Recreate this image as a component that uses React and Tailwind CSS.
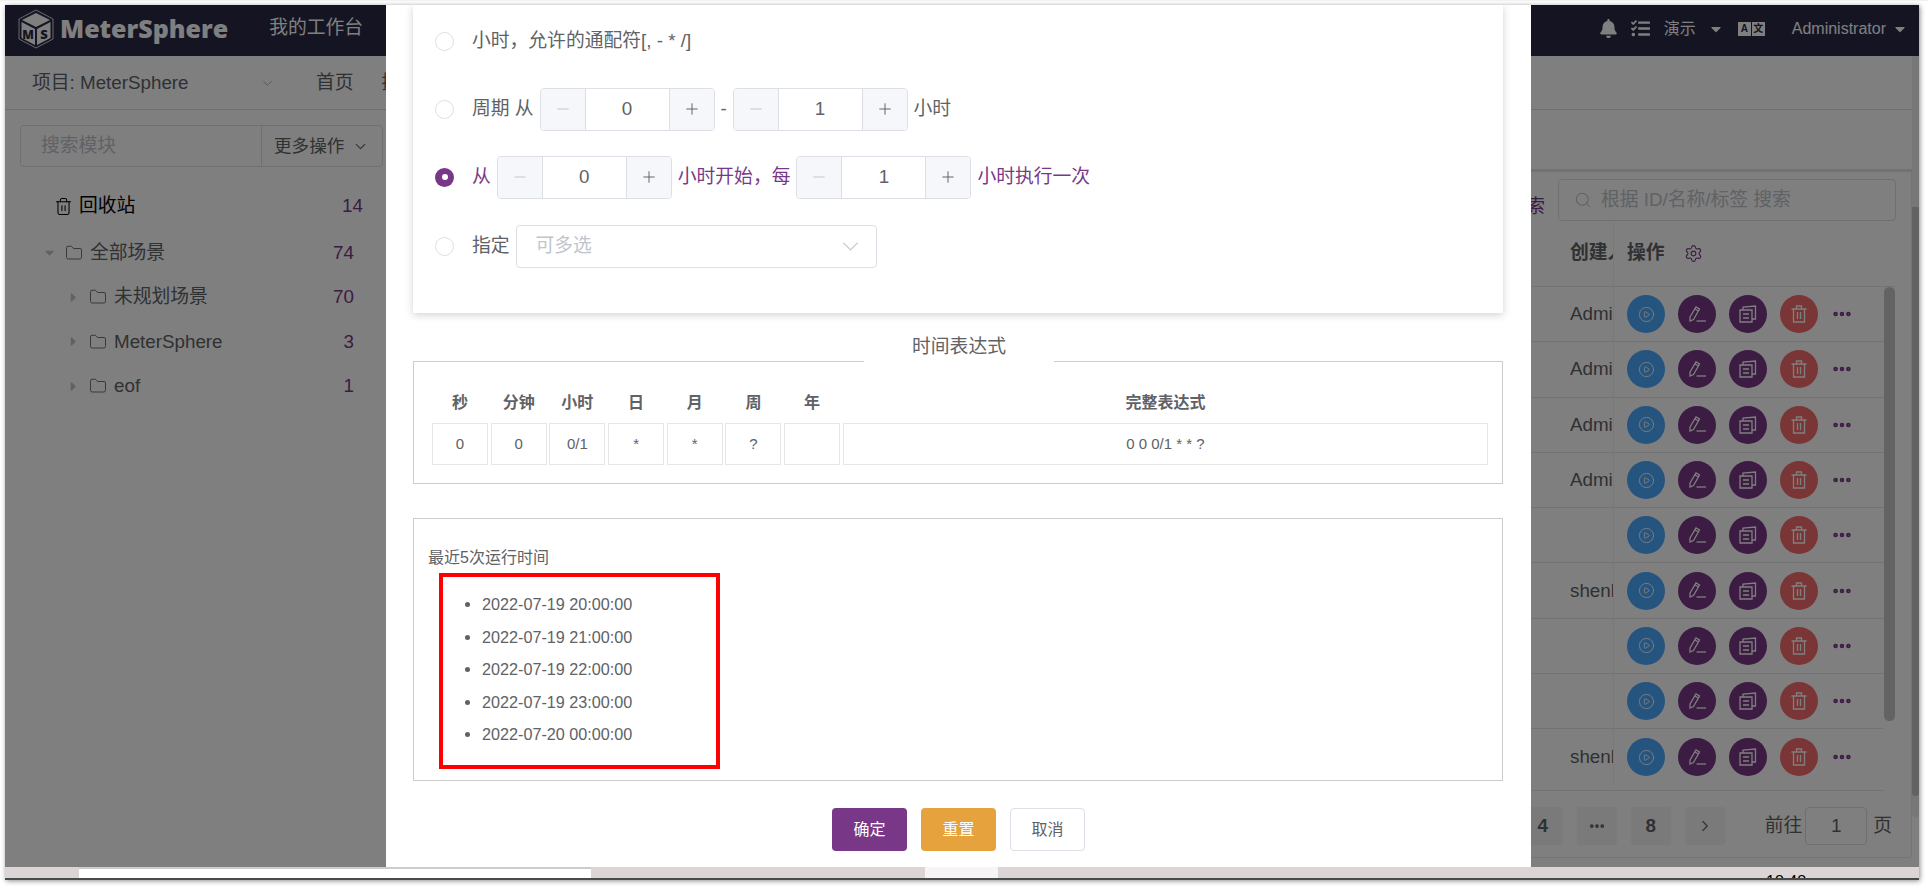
import { Minus, Plus, ChevronDown, ChevronRight, Search, Settings, CirclePlay, MoreHorizontal, Folder, Trash2 } from "lucide-react";
import { FaBell, FaTasks, FaCaretDown, FaCaretRight } from "react-icons/fa";

const creators = ["Administrator", "Administrator", "Administrator", "Administrator", "", "shenlei", "", "", "shenlei"];
const cronHead = ["秒", "分钟", "小时", "日", "月", "周", "年", "完整表达式"];
const cronVals = ["0", "0", "0/1", "*", "*", "?", "", "0 0 0/1 * * ?"];
const nextRuns = ["2022-07-19 20:00:00", "2022-07-19 21:00:00", "2022-07-19 22:00:00", "2022-07-19 23:00:00", "2022-07-20 00:00:00"];
const tree = [
  { name: "未规划场景", count: 70 },
  { name: "MeterSphere", count: 3 },
  { name: "eof", count: 1 },
];

const Logo = () => (
  <svg width="36" height="40" viewBox="0 0 36 40" fill="none">
    <path d="M18 1 L35 10 V30 L18 39 L1 30 V10 Z" stroke="#fff" strokeWidth="0.8" />
    <path d="M18 4 L32 11 L18 18 L4 11 Z" fill="#fff" />
    <path d="M3.5 13 L17 20 V36 L3.5 29 Z" fill="#fff" />
    <path d="M32.5 13 L19 20 V36 L32.5 29 Z" fill="#fff" />
    <text x="10" y="30" fontSize="12" fontWeight="900" fill="#292845" textAnchor="middle" fontFamily="Open Sans">M</text>
    <text x="26" y="30" fontSize="13" fontWeight="900" fill="#292845" textAnchor="middle" fontFamily="Open Sans">S</text>
  </svg>
);

const EditIcon = () => (
  <svg width="19" height="19" viewBox="0 0 19 19" fill="none" stroke="#fff" strokeWidth="1.3">
    <path d="M2 12 L8 2 L11.5 4 L5.5 14.5 L2 16 Z" />
    <path d="M7 4 L10.5 6" />
    <path d="M8.5 16 H18" />
  </svg>
);

const CopyIcon = () => (
  <svg width="18" height="18" viewBox="0 0 18 18" fill="none" stroke="#fff" strokeWidth="1.3">
    <path d="M1 5 H13 V17 H1 Z" />
    <path d="M4 5 V2 L16.5 1 V14 H13" />
    <path d="M4 9 H10 M4 13 H10" />
  </svg>
);

const DeleteIcon = () => (
  <svg width="16" height="18" viewBox="0 0 16 18" fill="none" stroke="#fff" strokeWidth="1.3">
    <path d="M0.5 4 H15.5 M2.5 4 V17 H13.5 V4 M5.5 4 V1 H10.5 V4 M6.5 7 V14 M9.5 7 V14" />
  </svg>
);

const NumberInput = ({ value }) => (
  <div className="flex h-[43px] w-[175px] shrink-0 overflow-hidden rounded-[4px] border border-[#dcdfe6]">
    <div className="flex w-[45px] items-center justify-center border-r border-[#dcdfe6] bg-[#f5f7fa] text-[#c0c4cc]">
      <Minus size={18} strokeWidth={1.3} />
    </div>
    <div className="flex flex-1 items-center justify-center text-[#606266]">{value}</div>
    <div className="flex w-[45px] items-center justify-center border-l border-[#dcdfe6] bg-[#f5f7fa] text-[#606266]">
      <Plus size={18} strokeWidth={1.3} />
    </div>
  </div>
);

const Radio = ({ checked }) => (
  checked ? (
    <div className="mr-[18px] flex h-[19px] w-[19px] shrink-0 items-center justify-center rounded-full bg-[#783887]">
      <div className="h-[6px] w-[6px] rounded-full bg-white" />
    </div>
  ) : (
    <div className="mr-[18px] h-[19px] w-[19px] shrink-0 rounded-full border border-[#dcdfe6] bg-white" />
  )
);

const ActionRow = () => (
  <div className="flex items-center">
    <div className="flex h-[38px] w-[38px] items-center justify-center rounded-full bg-[#4aa8ff] text-white">
      <CirclePlay size={17} strokeWidth={1.3} />
    </div>
    <div className="ml-[13px] flex h-[38px] w-[38px] items-center justify-center rounded-full bg-[#783887]">
      <EditIcon />
    </div>
    <div className="ml-[13px] flex h-[38px] w-[38px] items-center justify-center rounded-full bg-[#783887]">
      <CopyIcon />
    </div>
    <div className="ml-[13px] flex h-[38px] w-[38px] items-center justify-center rounded-full bg-[#f56c6c]">
      <DeleteIcon />
    </div>
    <MoreHorizontal size={22} strokeWidth={3} className="ml-[13px] text-[#783887]" />
  </div>
);

const Page = () => (
  <div className="flex h-[862px] flex-col">
    {/* top nav */}
    <div className="flex h-[51px] shrink-0 items-center bg-[#292845] pb-[4px] text-white">
      <div className="ml-[13px] flex items-center">
        <Logo />
        <span className="ml-[6px] font-['Open_Sans',sans-serif] text-[25px] font-extrabold">MeterSphere</span>
      </div>
      <span className="ml-[41px] text-[18.8px]">我的工作台</span>
      <div className="ml-auto mr-[11px] flex items-center">
        <FaBell size={19} />
        <FaTasks size={19} className="ml-[13px]" />
        <span className="ml-[14px] text-[16px]">演示</span>
        <FaCaretDown size={16} className="ml-[12px]" />
        <div className="ml-[14px] flex h-[14px] items-center text-[10px] font-bold text-[#292845]">
          <span className="flex h-[14px] w-[13px] items-center justify-center bg-white">A</span>
          <span className="ml-[1px] flex h-[14px] w-[13px] items-center justify-center bg-white">文</span>
        </div>
        <span className="ml-[27px] text-[16px]">Administrator</span>
        <FaCaretDown size={16} className="ml-[6px]" />
      </div>
    </div>

    {/* sub nav */}
    <div className="flex h-[54px] shrink-0 items-center border-b border-[#dedede] bg-white pl-[27px] pt-[2px] text-[18.8px] text-[#606266]">
      <span className="w-[228px]">项目: MeterSphere</span>
      <ChevronDown size={15} strokeWidth={1.2} className="text-[#909399]" />
      <span className="ml-[41px]">首页</span>
      <span className="ml-[28px]">接口测试</span>
    </div>

    <div className="flex min-h-0 flex-1 bg-white">
      {/* module tree */}
      <div className="w-[392px] shrink-0 border-r border-[#dedede] px-[15px] pt-[15px] text-[18.8px] text-[#606266]">
        <div className="flex h-[42px] w-[363px] rounded-[4px] border border-[#dcdfe6]">
          <div className="flex w-[241px] items-center border-r border-[#dcdfe6] pl-[20px] text-[#c0c4cc]">搜索模块</div>
          <div className="flex flex-1 items-center pl-[12px] text-[17.6px]">
            更多操作
            <ChevronDown size={17} strokeWidth={1.5} className="ml-[8px]" />
          </div>
        </div>
        <div className="mt-[17px] flex h-[44.5px] w-[343px] items-center pl-[34px] text-black">
          <Trash2 size={19} strokeWidth={1.3} />
          <span className="ml-[6px]">回收站</span>
          <span className="ml-auto text-[#783887]">14</span>
        </div>
        <div className="mt-[2px] flex h-[44.5px] w-[334px] items-center pl-[22px]">
          <FaCaretDown size={15} className="text-[#c0c4cc]" />
          <Folder size={18} strokeWidth={1.2} className="ml-[8px]" />
          <span className="ml-[7px]">全部场景</span>
          <span className="ml-auto text-[#783887]">74</span>
        </div>
        {tree.map((n) => (
          <div key={n.name} className="flex h-[44.5px] w-[334px] items-center pl-[46px]">
            <FaCaretRight size={15} className="text-[#c0c4cc]" />
            <Folder size={18} strokeWidth={1.2} className="ml-[8px]" />
            <span className="ml-[7px]">{n.name}</span>
            <span className="ml-auto text-[#783887]">{n.count}</span>
          </div>
        ))}
      </div>

      {/* scenario list */}
      <div className="flex min-w-0 flex-1 flex-col pr-[7px]">
        <div className="h-[62px] shrink-0 border-b-[3px] border-[#e4e4ea]" />
        <div className="mb-[11px] flex-1 rounded-br-[4px] border-r border-b border-[#e8e8e8] pr-[16px]">
          <div className="flex h-[49px] items-end justify-end text-[18.8px] text-[#783887]">
            <span>高级搜索</span>
            <div className="ml-[13px] mr-[-1px] flex h-[42px] w-[338px] items-center rounded-[4px] border border-[#dcdfe6] pl-[15px] text-[#c0c4cc]">
              <Search size={18} strokeWidth={1.4} />
              <span className="ml-[9px]">根据 ID/名称/标签 搜索</span>
            </div>
          </div>

          <div className="flex h-[66px] justify-end border-b border-[#e6e6e6] text-[18.8px] font-bold text-[#606266]">
            <div className="flex w-[43px] items-center overflow-hidden whitespace-nowrap">创建人</div>
            <div className="flex w-[282px] items-center border-l border-black/5 pl-[13px]">
              操作
              <Settings size={19} strokeWidth={1.4} className="ml-[19px] text-[#783887]" />
            </div>
          </div>

          <div className="flex">
            <div className="min-w-0 flex-1 border-b border-[#e6e6e6] pb-[5px]">
              {creators.map((c, i) => (
                <div key={i} className={`flex h-[55.3px] justify-end ${i < 8 ? "border-b border-[#e6e6e6]" : ""}`}>
                  <div className="flex w-[43px] items-center overflow-hidden whitespace-nowrap text-[18.8px] text-[#606266]">{c}</div>
                  <div className="flex w-[271px] items-center border-l border-black/5 pl-[13px]">
                    <ActionRow />
                  </div>
                </div>
              ))}
            </div>
            <div className="w-[11px] shrink-0">
              <div className="h-[434px] rounded-full bg-[#c6c6c6]" />
            </div>
          </div>

          <div className="mt-[4px] flex h-[62px] items-center justify-end text-[18.8px] text-[#606266]">
            <div className="flex h-[38px] w-[40px] items-center justify-center rounded-[3px] bg-[#f4f4f5] font-bold">4</div>
            <div className="ml-[14px] flex h-[38px] w-[40px] items-center justify-center rounded-[3px] bg-[#f4f4f5]">
              <MoreHorizontal size={18} strokeWidth={3} />
            </div>
            <div className="ml-[14px] flex h-[38px] w-[40px] items-center justify-center rounded-[3px] bg-[#f4f4f5] font-bold">8</div>
            <div className="ml-[14px] flex h-[38px] w-[40px] items-center justify-center rounded-[3px] bg-[#f4f4f5]">
              <ChevronRight size={18} strokeWidth={1.5} />
            </div>
            <span className="ml-[40px]">前往</span>
            <div className="ml-[3px] flex h-[38px] w-[62px] items-center justify-center rounded-[4px] border border-[#dcdfe6]">1</div>
            <span className="ml-[6px] mr-[3px]">页</span>
          </div>
        </div>
      </div>
    </div>
  </div>
);

const CronModal = () => (
  <div className="absolute top-0 left-[381px] h-[862px] w-[1145px] bg-white px-[27px] text-[18.8px] text-[#606266]">
    {/* hour tab */}
    <div className="h-[308px] w-[1090px] pl-[22px] pt-[15px] shadow-[0_2px_8px_rgba(0,0,0,0.18)]">
      <div className="flex h-[42px] items-center">
        <Radio />
        <span>小时，允许的通配符[, - * /]</span>
      </div>
      <div className="mt-[26px] flex h-[42px] items-center">
        <Radio />
        <span className="mr-[6px]">周期 从</span>
        <NumberInput value="0" />
        <span className="mx-[6px] w-[6px]">-</span>
        <NumberInput value="1" />
        <span className="ml-[6px]">小时</span>
      </div>
      <div className="mt-[26px] flex h-[42px] items-center text-[#783887]">
        <Radio checked />
        <span className="mr-[6px]">从</span>
        <NumberInput value="0" />
        <span className="mx-[6px]">小时开始，每</span>
        <NumberInput value="1" />
        <span className="ml-[6px]">小时执行一次</span>
      </div>
      <div className="mt-[27px] flex h-[42px] items-center">
        <Radio />
        <span className="mr-[6px]">指定</span>
        <div className="flex h-[43px] w-[361px] items-center justify-between rounded-[4px] border border-[#dcdfe6] pl-[19px] pr-[12px] text-[#c0c4cc]">
          可多选
          <ChevronDown size={27} strokeWidth={1} />
        </div>
      </div>
    </div>

    {/* expression */}
    <div className="relative mt-[48px] h-[123px] w-[1090px] border border-[#ccc] pl-[18px] pr-[14px] pt-[29px] text-[16px]">
      <div className="absolute top-[-32px] left-[450px] flex h-[34px] w-[190px] items-center justify-center bg-white text-[18.8px]">时间表达式</div>
      <div className="grid grid-cols-[repeat(7,56px)_1fr] gap-x-[2.7px]">
        {cronHead.map((h) => (
          <div key={h} className="flex h-[32px] items-center justify-center pb-[8px] font-bold">{h}</div>
        ))}
        {cronVals.map((v, i) => (
          <div key={i} className="flex h-[42px] items-center justify-center border border-[#e6e6e6] text-[15px]">{v}</div>
        ))}
      </div>
    </div>

    {/* next run times */}
    <div className="mt-[34px] h-[263px] w-[1090px] border border-[#ccc] pl-[14px] pt-[28px] text-[16px]">
      <div className="h-[26px] leading-[22px]">最近5次运行时间</div>
      <ul className="ml-[11px] h-[196px] w-[281px] list-disc border-4 border-[#f00] pl-[39px] pt-[11px] text-[16.2px]">
        {nextRuns.map((t) => (
          <li key={t} className="h-[32.5px] leading-[32.5px]">{t}</li>
        ))}
      </ul>
    </div>

    <div className="mt-[27px] flex justify-center gap-[14px] text-[16px]">
      <button className="h-[43px] w-[75px] rounded-[4px] bg-[#783887] text-white">确定</button>
      <button className="h-[43px] w-[75px] rounded-[4px] bg-[#e6a23c] text-white">重置</button>
      <button className="h-[43px] w-[75px] rounded-[4px] border border-[#dcdfe6] bg-white">取消</button>
    </div>
  </div>
);

const App = () => {
  return (
    <div className="h-[887px] w-[1928px] overflow-hidden border-t border-[#f0f0f0] bg-white pt-[4px] pl-[5px] font-['Liberation_Sans','Noto_Sans_CJK_SC',sans-serif]">
      <div className="h-[875px] w-[1914px] shadow-[1px_1px_5px_rgba(0,0,0,0.45)]">
        <div className="relative h-[862px] overflow-hidden">
          <Page />
          {/* page scrollbar */}
          <div className="absolute top-[51px] right-0 h-[761px] w-[7px] rounded-b-full bg-[#efefef]">
            <div className="mt-[151px] h-[589px] rounded-b-full bg-[#c4c4c4]" />
          </div>
          <div className="absolute inset-0 bg-black/50" />
          <CronModal />
        </div>
        {/* blurred task bar */}
        <div className="flex h-[13px] overflow-hidden border-b-2 border-[#4a4a4a] bg-[#dcd5d5]">
          <div className="ml-[74px] h-[11px] w-[512px] border-t-2 border-[#ccc] bg-white" />
          <div className="ml-[334px] h-[11px] w-[73px] bg-[#f6f4f4]" />
          <span className="ml-[768px] mt-[7px] text-[16px] leading-none text-black">18:48</span>
        </div>
      </div>
    </div>
  );
};

export default App;
